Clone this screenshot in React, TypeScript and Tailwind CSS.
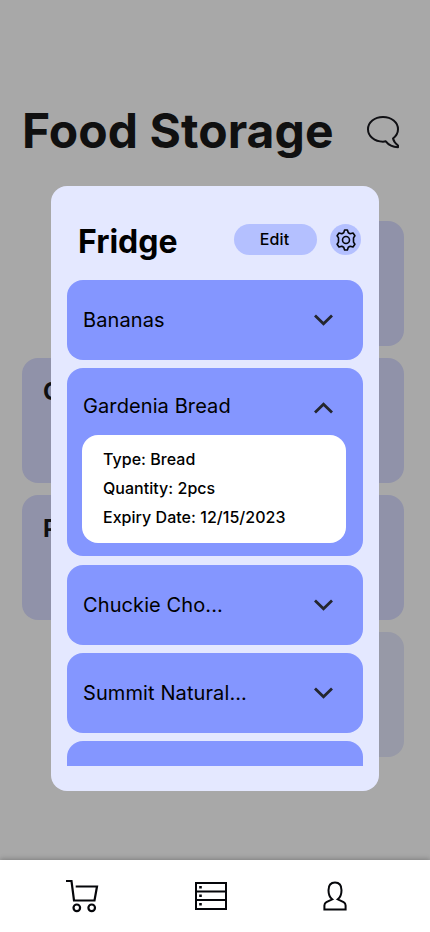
import React from 'react';

const items = [
  { name: 'Bananas' },
  {
    name: 'Gardenia Bread',
    details: ['Type: Bread', 'Quantity: 2pcs', 'Expiry Date: 12/15/2023'],
  },
  { name: 'Chuckie Cho...' },
  { name: 'Summit Natural...' },
];

const Chevron = ({ up = false }: { up?: boolean }) => (
  <svg className={up ? 'mt-[3px] h-[12px] w-[20px] rotate-180' : 'h-[12px] w-[20px]'} viewBox="0 0 20 12" fill="none" stroke="#24262f" strokeWidth="2.8">
    <path d="M2 1.500L10.500 9.800L19 1.500" transform={up ? 'translate(-1 0)' : undefined} />
  </svg>
);

const ChatIcon = () => (
  <svg className="mt-[2px] h-[34px] w-[34px]" viewBox="0 0 34 34" fill="none" stroke="#101014" strokeWidth="2" strokeLinejoin="round">
    <path d="M19.800 26.300C18.900 26.600 17.900 26.700 17 26.700C8.500 26.700 2 21.200 2 14.300C2 7.400 8.500 2 17 2S32 7.400 32 14.300C32 17.800 30.300 20.900 27 23.600C27.800 26.800 30 29 32 30.500V32.200C26.800 32 22.800 30.200 19.800 26.300Z" />
  </svg>
);

const GearIcon = () => (
  <svg className="h-[22px] w-[22px]" viewBox="0 0 22 22" fill="none" stroke="#05060a" strokeWidth="1.600" strokeLinejoin="round">
    <path d="M9.600 1H12.400L13.300 3.700L15.200 4.700L18 4L19.900 6.800L18.500 8.900V13.100L19.900 15.200L18 18L15.200 17.300L13.300 18.300L12.400 21H9.600L8.700 18.300L6.800 17.300L4 18L2.100 15.200L3.500 13.100V8.900L2.100 6.800L4 4L6.800 4.700L8.700 3.700Z" />
    <circle cx="11" cy="11" r="3.500" />
  </svg>
);

const CartIcon = () => (
  <svg className="h-[34px] w-[34px]" viewBox="0 0 34 34" fill="none" stroke="#05060a" strokeWidth="2.200">
    <path d="M1 2H6.500L9 21.500H29.500L32 7.500H10.700" />
    <circle cx="11.800" cy="28.800" r="3.300" />
    <circle cx="26.700" cy="28.800" r="3.300" />
  </svg>
);

const StorageIcon = () => (
  <svg className="h-[28px] w-[32px]" viewBox="0 0 32 28" fill="none" stroke="#05060a" strokeWidth="2">
    <path d="M1 1H31V27H1ZM1 9.500H31M1 18H31" />
    <path d="M4.200 5.300H6.800M4.200 13.700H6.800M4.200 22.300H6.800" strokeWidth="2.500" />
  </svg>
);

const ProfileIcon = () => (
  <svg className="h-[30px] w-[24px]" viewBox="0 0 24 30" fill="none" stroke="#05060a" strokeWidth="2">
    <path d="M9.200 18.300C6.800 16.500 5.500 13.200 5.500 9.200C5.500 4.200 7.800 1.500 12 1.500S18.500 4.200 18.500 9.200C18.500 13.200 17.200 16.500 14.800 18.300L20.600 21.200Q22.600 22.300 22.600 24.500V28.500H1.400V24.500Q1.400 22.300 3.400 21.200Z" />
  </svg>
);

const Card = ({ title }: { title?: string }) => (
  <div className="h-[125px] rounded-2xl bg-[#9092a9] px-[21px] pt-[19px] text-2xl leading-[30px] font-bold">
    {title}
  </div>
);

const App = () => {
  return (
    <div className="relative flex h-[932px] w-[430px] flex-col overflow-hidden bg-[#a8a8a8] font-['Inter',sans-serif] text-black">
      <main className="flex-1 text-[#101010]">
        <div className="flex items-center justify-between pt-[102px] pr-[30px] pl-[22px]">
          <h1 className="text-[48px] leading-[58px] font-bold tracking-[0.05px] whitespace-nowrap">Food Storage</h1>
          <ChatIcon />
        </div>
        <div className="mt-[61px] grid grid-cols-2 gap-3 pr-[26px] pl-[22px]">
          <div className="col-start-2 h-[125px] rounded-2xl bg-[#9092a9]" />
          <Card title="C" />
          <Card />
          <Card title="P" />
          <Card />
          <div className="col-start-2 h-[125px] rounded-2xl bg-[#9799a7]" />
        </div>
      </main>

      <nav className="flex h-[72px] items-center bg-white pl-[65px] shadow-[0_-1px_5px_rgba(0,0,0,0.25)]">
        <CartIcon />
        <div className="ml-[96px]">
          <StorageIcon />
        </div>
        <div className="ml-[96px]">
          <ProfileIcon />
        </div>
      </nav>

      <div className="absolute top-[186px] left-[51px] flex h-[605px] w-[328px] flex-col rounded-2xl bg-[#e4e8ff] px-4 pb-[25px]">
        <div className="flex h-[94px] shrink-0 items-center pt-[13px] pr-[2px] pl-[11px]">
          <h2 className="flex-1 pt-[3px] text-[32px] leading-[39px] font-bold">Fridge</h2>
          <button className="h-[31px] w-[83px] rounded-full bg-[#b4c0ff] pr-[2px] pb-[2px] text-base font-medium tracking-[0.1px]">Edit</button>
          <button className="ml-[13px] flex h-[31px] w-[31px] items-center justify-center rounded-full bg-[#b4c0ff]">
            <GearIcon />
          </button>
        </div>
        <div className="flex min-h-0 flex-1 flex-col gap-2 overflow-hidden">
          {items.map((item) =>
            item.details ? (
              <div key={item.name} className="mb-px h-[188px] shrink-0 rounded-2xl bg-[#8496ff]">
                <div className="flex h-[67px] items-center justify-between pt-[9px] pr-[30px] pl-4 text-xl tracking-[0.1px]">
                  <span>{item.name}</span>
                  <Chevron up />
                </div>
                <div className="mr-[17px] ml-[15px] h-[108px] rounded-2xl bg-white pt-[10px] pl-[21px] text-base leading-[29px] font-medium tracking-[0.03px]">
                  {item.details.map((line) => (
                    <p key={line}>{line}</p>
                  ))}
                </div>
              </div>
            ) : (
              <div key={item.name} className="flex h-[80px] shrink-0 items-center justify-between rounded-2xl bg-[#8496ff] pr-[30px] pl-4 text-xl tracking-[0.1px]">
                <span>{item.name}</span>
                <Chevron />
              </div>
            )
          )}
          <div className="h-[80px] shrink-0 rounded-2xl bg-[#8496ff]" />
        </div>
      </div>
    </div>
  );
};

export default App;
